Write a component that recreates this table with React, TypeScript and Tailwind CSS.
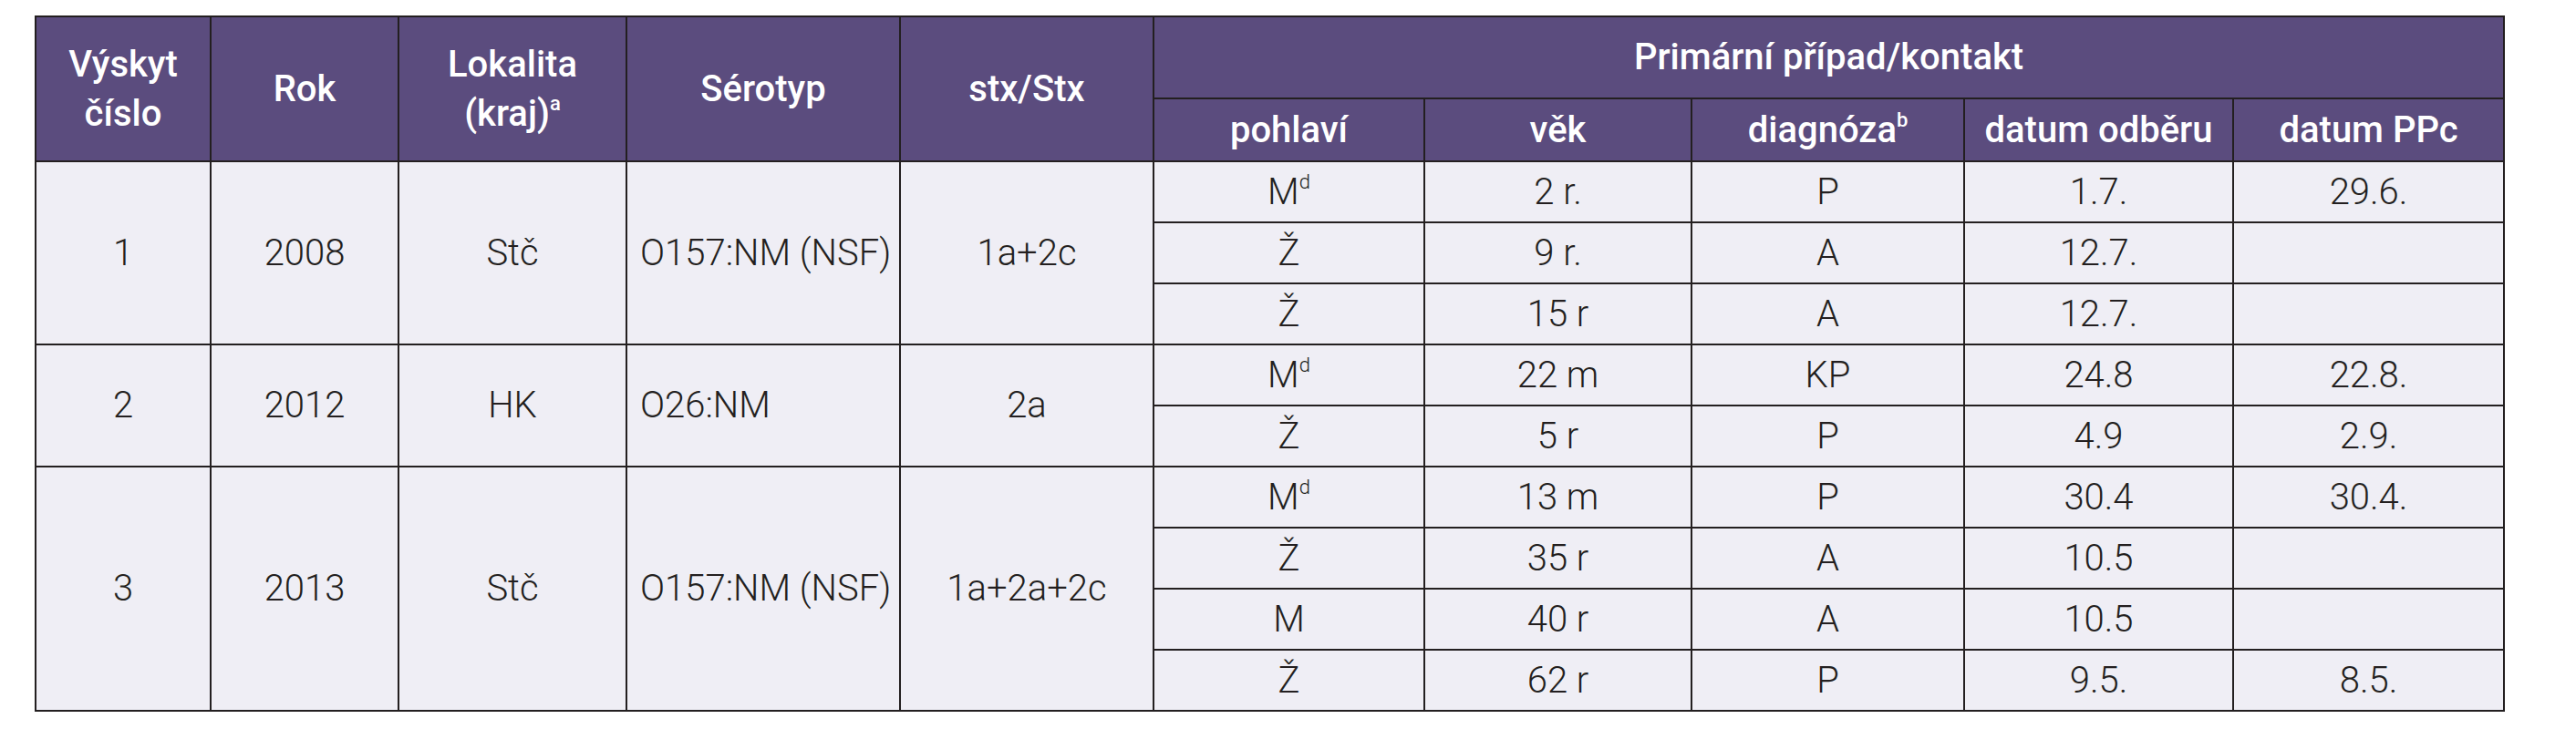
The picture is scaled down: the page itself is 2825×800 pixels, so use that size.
import React from 'react';

type Row = {
  sex: string;
  sup?: boolean;
  age: string;
  dg: string;
  odber: string;
  ppc: string;
};

type Outbreak = {
  id: string;
  year: string;
  region: string;
  serotype: string;
  stx: string;
  rows: Row[];
};

const outbreaks: Outbreak[] = [
  {
    id: '1',
    year: '2008',
    region: 'Stč',
    serotype: 'O157:NM (NSF)',
    stx: '1a+2c',
    rows: [
      { sex: 'M', sup: true, age: '2 r.', dg: 'P', odber: '1.7.', ppc: '29.6.' },
      { sex: 'Ž', age: '9 r.', dg: 'A', odber: '12.7.', ppc: '' },
      { sex: 'Ž', age: '15 r', dg: 'A', odber: '12.7.', ppc: '' },
    ],
  },
  {
    id: '2',
    year: '2012',
    region: 'HK',
    serotype: 'O26:NM',
    stx: '2a',
    rows: [
      { sex: 'M', sup: true, age: '22 m', dg: 'KP', odber: '24.8', ppc: '22.8.' },
      { sex: 'Ž', age: '5 r', dg: 'P', odber: '4.9', ppc: '2.9.' },
    ],
  },
  {
    id: '3',
    year: '2013',
    region: 'Stč',
    serotype: 'O157:NM (NSF)',
    stx: '1a+2a+2c',
    rows: [
      { sex: 'M', sup: true, age: '13 m', dg: 'P', odber: '30.4', ppc: '30.4.' },
      { sex: 'Ž', age: '35 r', dg: 'A', odber: '10.5', ppc: '' },
      { sex: 'M', age: '40 r', dg: 'A', odber: '10.5', ppc: '' },
      { sex: 'Ž', age: '62 r', dg: 'P', odber: '9.5.', ppc: '8.5.' },
    ],
  },
];

const th = 'border-2 border-[#231f20] bg-[#5b4c7e] text-white font-medium text-center align-middle px-2';
const td = 'border-2 border-[#231f20] text-center align-middle font-light';

export default function App() {
  return (
    <div className="min-h-[800px] w-[2825px] bg-white pt-[17px] pl-[38px] font-['Roboto',sans-serif] text-[40px] text-[#231f20]">
      <table className="w-[2707px] table-fixed border-collapse border-2 border-[#231f20] bg-[#efeef5] leading-[1.35]">
        <colgroup>
          <col className="w-[192px]" />
          <col className="w-[206px]" />
          <col className="w-[250px]" />
          <col className="w-[300px]" />
          <col className="w-[278px]" />
          <col className="w-[297px]" />
          <col className="w-[293px]" />
          <col className="w-[299px]" />
          <col className="w-[295px]" />
          <col className="w-[297px]" />
        </colgroup>
        <thead>
          <tr className="h-[90px]">
            <th rowSpan={2} className={th}>
              Výskyt
              <br />
              číslo
            </th>
            <th rowSpan={2} className={th}>Rok</th>
            <th rowSpan={2} className={th}>
              Lokalita
              <br />
              (kraj)<sup className="text-[0.55em] -top-[0.75em]">a</sup>
            </th>
            <th rowSpan={2} className={th}>Sérotyp</th>
            <th rowSpan={2} className={th}>stx/Stx</th>
            <th colSpan={5} className={th}>Primární případ/kontakt</th>
          </tr>
          <tr className="h-[69px]">
            <th className={th}>pohlaví</th>
            <th className={th}>věk</th>
            <th className={th}>
              diagnóza<sup className="text-[0.55em] -top-[0.75em]">b</sup>
            </th>
            <th className={th}>datum odběru</th>
            <th className={th}>datum PPc</th>
          </tr>
        </thead>
        <tbody>
          {outbreaks.map((o) =>
            o.rows.map((r, i) => (
              <tr key={o.id + '-' + i} className="h-[67px]">
                {i === 0 && (
                  <>
                    <td rowSpan={o.rows.length} className={td}>{o.id}</td>
                    <td rowSpan={o.rows.length} className={td}>{o.year}</td>
                    <td rowSpan={o.rows.length} className={td}>{o.region}</td>
                    <td rowSpan={o.rows.length} className={td + ' !text-left pl-[14px] whitespace-nowrap'}>
                      {o.serotype}
                    </td>
                    <td rowSpan={o.rows.length} className={td}>{o.stx}</td>
                  </>
                )}
                <td className={td}>
                  {r.sex}
                  {r.sup && <sup className="text-[0.55em] -top-[0.75em]">d</sup>}
                </td>
                <td className={td}>{r.age}</td>
                <td className={td}>{r.dg}</td>
                <td className={td}>{r.odber}</td>
                <td className={td}>{r.ppc}</td>
              </tr>
            ))
          )}
        </tbody>
      </table>
    </div>
  );
}
